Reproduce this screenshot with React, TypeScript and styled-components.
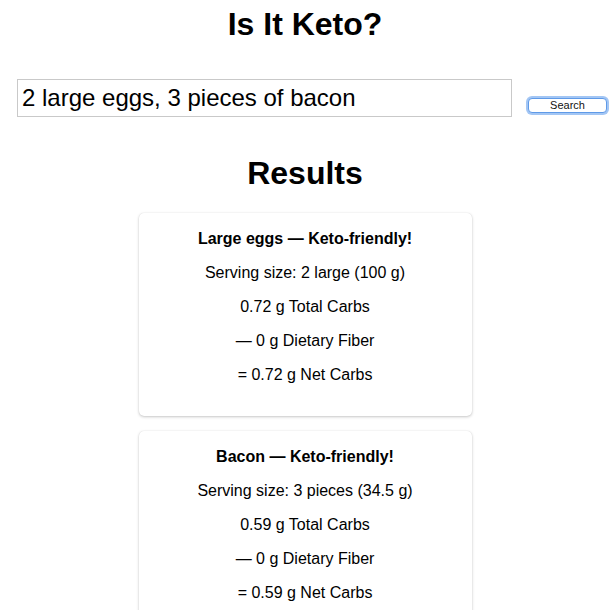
import React from "react";
import styled, { createGlobalStyle } from "styled-components";

const GlobalStyle = createGlobalStyle`
  html, body {
    margin: 0;
    padding: 0;
    background: #ffffff;
  }

  body {
    font-family: "Liberation Sans", Arial, Helvetica, sans-serif;
    color: #000;
  }
`;

const Page = styled.div`
  width: 610px;
  display: flex;
  flex-direction: column;
`;

const Title = styled.h1`
  font-size: 32px;
  font-weight: 700;
  line-height: 37px;
  text-align: center;
  margin: 6px 0 0;
`;

const SearchRow = styled.form`
  display: flex;
  align-items: flex-end;
  margin-top: 36px;
  padding-left: 17px;
`;

const SearchInput = styled.input`
  box-sizing: border-box;
  width: 495px;
  height: 38px;
  padding: 0 4px;
  border: 1px solid #c9c9c9;
  border-radius: 0;
  font-family: "Liberation Sans", Arial, sans-serif;
  font-size: 24px;
  color: #000;
  outline: none;
`;

const SearchButton = styled.button`
  box-sizing: border-box;
  width: 79px;
  height: 15px;
  margin: 0 0 4px 16px;
  padding: 0;
  background: #ffffff;
  border: 1px solid #5f9ae8;
  border-radius: 4px;
  box-shadow: 0 0 0 2px #a3c6f4;
  font-family: "Liberation Sans", Arial, sans-serif;
  font-size: 11px;
  line-height: 13px;
  color: #111;
`;

const Heading = styled.h2`
  font-size: 32px;
  font-weight: 700;
  line-height: 37px;
  text-align: center;
  margin: 38px 0 21px;
`;

const CardList = styled.div`
  display: flex;
  flex-direction: column;
  align-items: center;
  gap: 15px;
`;

const Card = styled.div`
  box-sizing: border-box;
  width: 333px;
  padding: 1px 16px 16px;
  background: #fff;
  border-radius: 5px;
  box-shadow: 0 1px 3px rgba(0, 0, 0, 0.22), 0 0 1px rgba(0, 0, 0, 0.12);
  text-align: center;
`;

const Line = styled.p<{ $bold?: boolean }>`
  margin: 16px 0;
  font-size: 16px;
  line-height: 18px;
  font-weight: ${(p) => (p.$bold ? 700 : 400)};
`;

interface Food {
  name: string;
  serving: string;
  total: string;
  fiber: string;
  net: string;
}

const foods: Food[] = [
  { name: "Large eggs", serving: "2 large (100 g)", total: "0.72", fiber: "0", net: "0.72" },
  { name: "Bacon", serving: "3 pieces (34.5 g)", total: "0.59", fiber: "0", net: "0.59" },
];

function ResultCard({ food }: { food: Food }) {
  return (
    <Card>
      <Line $bold>{food.name} — Keto-friendly!</Line>
      <Line>Serving size: {food.serving}</Line>
      <Line>{food.total} g Total Carbs</Line>
      <Line>— {food.fiber} g Dietary Fiber</Line>
      <Line>= {food.net} g Net Carbs</Line>
    </Card>
  );
}

export default function App() {
  const [query, setQuery] = React.useState("2 large eggs, 3 pieces of bacon");

  return (
    <Page>
      <GlobalStyle />
      <Title>Is It Keto?</Title>
      <SearchRow onSubmit={(e) => e.preventDefault()}>
        <SearchInput value={query} onChange={(e) => setQuery(e.target.value)} />
        <SearchButton type="submit">Search</SearchButton>
      </SearchRow>
      <Heading>Results</Heading>
      <CardList>
        {foods.map((f) => (
          <ResultCard key={f.name} food={f} />
        ))}
      </CardList>
    </Page>
  );
}
